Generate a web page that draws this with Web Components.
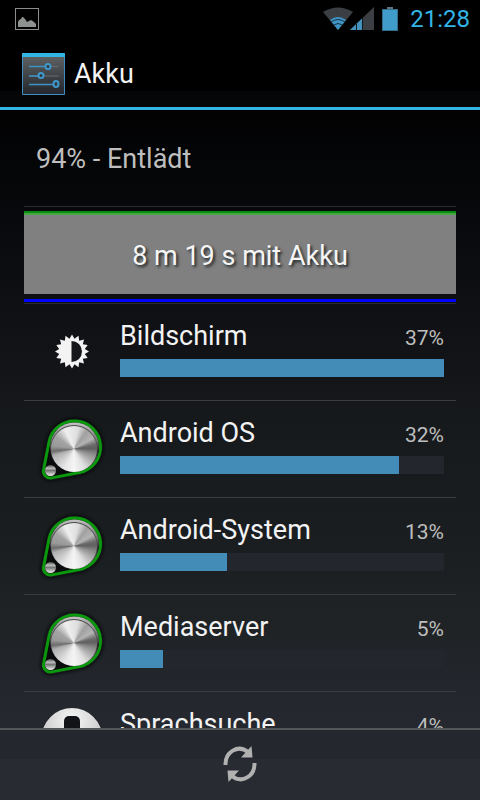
<!DOCTYPE html>
<html lang="de">
<head>
<meta charset="utf-8">
<meta name="viewport" content="width=device-width, initial-scale=1">
<title>Akku</title>
<style>
  body {
    margin: 0;
    background: #000;
    color: #f3f3f3;
    font-family: Roboto, "Noto Sans", sans-serif;
  }
</style>
</head>
<body>
<battery-screen>
  <status-bar slot="top" time="21:28"></status-bar>
  <action-bar slot="top">Akku</action-bar>

  <battery-summary>94% - Entlädt</battery-summary>
  <battery-graph>8 m 19 s mit Akku</battery-graph>
  <usage-item percent="37" level="37"><brightness-icon slot="icon"></brightness-icon>Bildschirm</usage-item>
  <usage-item percent="32" level="31.9"><knob-icon slot="icon"></knob-icon>Android OS</usage-item>
  <usage-item percent="13" level="12.2"><knob-icon slot="icon"></knob-icon>Android-System</usage-item>
  <usage-item percent="5" level="4.9"><knob-icon slot="icon"></knob-icon>Mediaserver</usage-item>
  <usage-item percent="4" level="4"><voice-icon slot="icon"></voice-icon>Sprachsuche</usage-item>

  <bottom-bar slot="bottom"></bottom-bar>
</battery-screen>

<script>
// Helper: attach the shadow root and fill it
function render(el, html) {
  el.attachShadow({ mode: 'open' }).innerHTML = html;
}

class BatteryScreen extends HTMLElement {
  constructor() {
    super();
    render(this, `
      <style>
        :host {
          display: flex;
          flex-direction: column;
          height: 100vh;
          background: linear-gradient(#000 0%, #020203 14%, #050608 22%, #0b0c0f 32%, #0f1013 38%, #131417 46%, #171a1c 54%, #1b1e21 68%, #202427 80%, #24272e 88%, #282b32 100%);
        }
        /* Scrolling list between the bars */
        main {
          flex: 1;
          min-height: 0;
          overflow-y: auto;
          scrollbar-width: none;
          padding: 0 24px;
        }
      </style>
      <slot name="top"></slot>
      <main><slot></slot></main>
      <slot name="bottom"></slot>
    `);
  }
}

class StatusBar extends HTMLElement {
  constructor() {
    super();
    render(this, `
      <style>
        :host {
          display: flex;
          align-items: center;
          justify-content: space-between;
          flex: none;
          height: 38px;
          padding: 0 10px 0 15px;
          background: #000;
          color: #33b5e5;
          font-size: 24px;
          line-height: 28px;
        }
        svg { display: block; }
        .right { display: flex; align-items: center; gap: 8px; }
        .clock { margin-left: 4px; }
      </style>
      <svg width="24" height="22" viewBox="0 0 24 22">
        <rect x=".5" y=".5" width="23" height="21" fill="none" stroke="#8c8c8c"/>
        <path d="M3 19v-5l1-2 2-1 1-2h1l2 2 2 3 2-1 2-1 3 2 2 2v3z" fill="#8f9390"/>
      </svg>
      <div class="right">
        <svg width="51" height="24" viewBox="0 0 51 24">
          <path d="M0 5Q15-4 30 5L15 23z" fill="#3b3f44"/>
          <path d="M7 13Q15 7 23 13L15 23z" fill="#3f93c4"/>
          <path d="M8 15q7-5 14 0M10.500 18q4.500-3 9 0" fill="none" stroke="#17313f" stroke-width="1"/>
          <path d="M27 23L51 0v23z" fill="#3b3f44"/>
          <path d="M27 23L39 11.500V23z" fill="#4592bd"/>
          <path d="M33.500 17v6M39.500 11v12" stroke="#12191e" stroke-width="1"/>
        </svg>
        <svg width="16" height="24" viewBox="0 0 16 24">
          <path d="M5 0h6v2h5v22H0V2h5z" fill="#356f8d"/>
          <path d="M1 3h14v20H1z" fill="#3f9ccb"/>
          <path d="M5 0h6v2H5z" fill="#5d7480"/>
        </svg>
        <span class="clock">${this.getAttribute('time') || ''}</span>
      </div>
    `);
  }
}

class ActionBar extends HTMLElement {
  constructor() {
    super();
    render(this, `
      <style>
        :host {
          display: flex;
          align-items: center;
          gap: 9px;
          flex: none;
          box-sizing: border-box;
          height: 72px;
          padding: 3px 22px 0;
          border-bottom: 3px solid #33b5e5;
          background: linear-gradient(#000 77%, #050608 77%);
        }
        h1 {
          margin: 0;
          font-size: 27px;
          font-weight: 400;
          line-height: 32px;
        }
        svg { display: block; }
      </style>
      <svg width="43" height="42" viewBox="0 0 43 42">
        <defs>
          <linearGradient id="plate" x2="0" y2="1">
            <stop offset="0" stop-color="#5c6061"/>
            <stop offset="1" stop-color="#23272d"/>
          </linearGradient>
        </defs>
        <rect width="43" height="42" rx="1" fill="#3e8fc0"/>
        <rect x="1" y="4" width="41" height="37" fill="url(#plate)"/>
        <path d="M0 1q0-1 1-1h41q1 0 1 1v3H0z" fill="#33b5e5"/>
        <path d="M7 13.500h29M7 23h30M7 31.500h29" stroke="#686d70"/>
        <path d="M7 13.500h17M7 23h10M7 31.500h25" stroke="#3f92c4" stroke-width="1.500"/>
        <g fill="#30383f" stroke="#3f98cb" stroke-width="2">
          <circle cx="26" cy="13.500" r="2.500"/>
          <circle cx="19" cy="22.500" r="2.500"/>
          <ellipse cx="34" cy="31" rx="2.500" ry="3"/>
        </g>
      </svg>
      <h1><slot></slot></h1>
    `);
  }
}

class BatterySummary extends HTMLElement {
  constructor() {
    super();
    render(this, `
      <style>
        :host {
          display: flex;
          align-items: center;
          box-sizing: border-box;
          height: 97px;
          padding: 2px 12px 0;
          border-bottom: 1px solid #2b2c30;
          color: #bebebe;
          font-size: 27px;
          line-height: 32px;
        }
      </style>
      <slot></slot>
    `);
  }
}

class BatteryGraph extends HTMLElement {
  constructor() {
    super();
    render(this, `
      <style>
        :host {
          display: block;
          padding: 4px 0 1px;
          border-bottom: 1px solid #2b2c30;
        }
        /* Battery level, drawn as the top edge of the area */
        .level {
          height: 4px;
          background: linear-gradient(#0a8c10 50%, #44a944 50%);
        }
        .area {
          padding: 25px 0 22px;
          background: #808080;
          color: #f5f5f5;
          font-size: 27px;
          line-height: 32px;
          text-align: center;
          text-shadow: 2px 2px 3px #1e2326;
        }
        .running {
          margin-top: 5px;
          height: 3px;
          background: #00f;
        }
      </style>
      <div class="level"></div>
      <div class="area"><slot></slot></div>
      <div class="running"></div>
    `);
  }
}

class UsageItem extends HTMLElement {
  constructor() {
    super();
    const percent = this.getAttribute('percent');
    const level = this.getAttribute('level');
    // The bars are relative to the biggest consumer (37%)
    render(this, `
      <style>
        :host {
          display: flex;
          gap: 12px;
          padding: 12px;
          border-bottom: 1px solid #393c40;
        }
        .body { flex: 1; min-width: 0; padding-top: 4px; }
        .line {
          display: flex;
          align-items: baseline;
          justify-content: space-between;
          font-size: 27px;
          line-height: 32px;
        }
        .percent { color: #bebebe; font-size: 21px; line-height: 24px; }
        progress {
          display: block;
          width: 100%;
          height: 18px;
          margin-top: 7px;
          border: 0;
          appearance: none;
          background: #23262d;
        }
        progress::-webkit-progress-bar { background: #23262d; }
        progress::-webkit-progress-value { background: #448cb8; }
        progress::-moz-progress-bar { background: #448cb8; }
      </style>
      <slot name="icon"></slot>
      <div class="body">
        <div class="line">
          <label for="bar"><slot></slot></label>
          <span class="percent">${percent}%</span>
        </div>
        <progress id="bar" max="37" value="${level}"></progress>
      </div>
    `);
  }
}

const iconStyle = `
  <style>
    :host { display: block; flex: none; width: 72px; height: 72px; }
    svg { display: block; }
  </style>
`;

class BrightnessIcon extends HTMLElement {
  constructor() {
    super();
    // 16 pointed star around a half filled disc
    const points = [];
    for (let i = 0; i < 32; i++) {
      const r = i % 2 ? 13 : 17;
      const a = i * Math.PI / 16;
      points.push((36 + r * Math.sin(a)).toFixed(1) + ',' + (35.5 - r * Math.cos(a)).toFixed(1));
    }
    render(this, `
      ${iconStyle}
      <svg width="72" height="72" viewBox="0 0 72 72">
        <polygon points="${points.join(' ')}" fill="#f3f3f3"/>
        <path d="M35.500 25a10.500 10.500 0 0 1 0 21z" fill="#15171b"/>
      </svg>
    `);
  }
}

class KnobIcon extends HTMLElement {
  constructor() {
    super();
    render(this, `
      ${iconStyle}
      <style>
        .metal {
          width: 46px;
          height: 46px;
          border-radius: 50%;
          background: conic-gradient(#e4e4e4 0deg, #ddd 12deg, #a0a0a0 35deg, #b4b4b4 60deg, #6a6a6a 78deg, #606060 88deg, #8c8c8c 105deg, #b0b0b0 125deg, #e0e0e0 150deg, #f5f5f5 180deg, #e8e8e8 205deg, #c5c5c5 235deg, #b0b0b0 252deg, #6c6c6c 264deg, #999 278deg, #a4a4a4 305deg, #eee 335deg, #e4e4e4 360deg);
        }
      </style>
      <svg width="72" height="72" viewBox="0 0 72 72">
        <defs>
          <linearGradient id="rim" x2="0" y2="1">
            <stop offset="0" stop-color="#c4c4c4"/>
            <stop offset=".4" stop-color="#6c6c6c"/>
            <stop offset=".6" stop-color="#222"/>
            <stop offset="1" stop-color="#aaa"/>
          </linearGradient>
          <linearGradient id="ball" x2="0" y2="1">
            <stop offset="0" stop-color="#555"/>
            <stop offset=".3" stop-color="#bbb"/>
            <stop offset=".5" stop-color="#777"/>
            <stop offset="1" stop-color="#eee"/>
          </linearGradient>
          <filter id="soft" x="-20%" y="-20%" width="140%" height="140%"><feGaussianBlur stdDeviation="2"/></filter>
        </defs>
        <path d="M7.600 56.700L13 29A26 26 0 1 1 43.500 59.500L15.800 64.900A7 7 0 0 1 7.600 56.700z" fill="#08090b" stroke="#08090b" stroke-width="5" filter="url(#soft)"/>
        <path d="M7.600 56.700L13 29A26 26 0 1 1 43.500 59.500L15.800 64.900A7 7 0 0 1 7.600 56.700z" fill="#0a0b0c" stroke="#0a990d" stroke-width="3"/>
        <circle cx="38.500" cy="34" r="24.500" fill="url(#rim)"/>
        <circle cx="38" cy="35.500" r="23.500" fill="#4d4d4d"/>
        <foreignObject x="15" y="13" width="46" height="46"><div class="metal"></div></foreignObject>
        <circle cx="14.500" cy="57.500" r="5.500" fill="url(#ball)"/>
      </svg>
    `);
  }
}

class VoiceIcon extends HTMLElement {
  constructor() {
    super();
    render(this, `
      ${iconStyle}
      <svg width="72" height="72" viewBox="0 0 72 72">
        <defs>
          <radialGradient id="disc" cy=".2">
            <stop offset="0" stop-color="#f6f6f6"/>
            <stop offset="1" stop-color="#ccc"/>
          </radialGradient>
        </defs>
        <circle cx="36" cy="36" r="32" fill="#15171b"/>
        <circle cx="36" cy="34.500" r="30.500" fill="url(#disc)"/>
        <rect x="28" y="12" width="16" height="30" rx="5" fill="#111316"/>
        <path d="M22 34v4a14 14 0 0 0 28 0v-4M36 52v8" fill="none" stroke="#111316" stroke-width="3"/>
      </svg>
    `);
  }
}

class BottomBar extends HTMLElement {
  constructor() {
    super();
    render(this, `
      <style>
        :host {
          display: flex;
          align-items: center;
          justify-content: center;
          flex: none;
          box-sizing: border-box;
          height: 72px;
          border-top: 2px solid #54575a;
          background: linear-gradient(#24272e 41%, #282b32 41%);
        }
        button {
          display: block;
          padding: 12px 24px 14px;
          border: 0;
          background: none;
          cursor: pointer;
        }
        svg { display: block; }
      </style>
      <button type="button" aria-label="Aktualisieren">
        <svg width="34" height="36" viewBox="0 0 34 36">
          <g id="arrow">
            <path d="M2.500 19C2 6 15-2 25 6" fill="none" stroke="#b1b1b1" stroke-width="4"/>
            <path d="M28.500 0l1 11.500H18z" fill="#b1b1b1"/>
          </g>
          <use href="#arrow" transform="rotate(180 17 18)"/>
        </svg>
      </button>
    `);
  }
}

customElements.define('battery-screen', BatteryScreen);
customElements.define('status-bar', StatusBar);
customElements.define('action-bar', ActionBar);
customElements.define('battery-summary', BatterySummary);
customElements.define('battery-graph', BatteryGraph);
customElements.define('usage-item', UsageItem);
customElements.define('brightness-icon', BrightnessIcon);
customElements.define('knob-icon', KnobIcon);
customElements.define('voice-icon', VoiceIcon);
customElements.define('bottom-bar', BottomBar);
</script>
</body>
</html>
